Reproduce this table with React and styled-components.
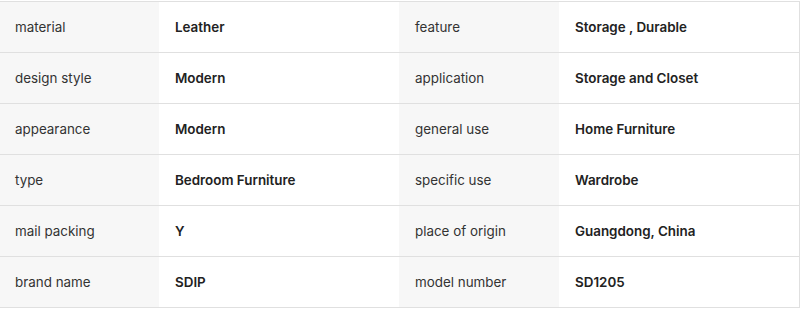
import React from 'react';
import styled, { createGlobalStyle } from 'styled-components';

const GlobalStyle = createGlobalStyle`
  body {
    margin: 0;
    background: #fff;
    font-family: Inter, "Noto Sans", sans-serif;
  }
`;

const Page = styled.div`
  padding-top: 1px;
  margin-left: -1px;
`;

const Table = styled.div`
  display: grid;
  grid-template-columns: 160px 240px 160px 240px;
  width: 800px;
  border-top: 1px solid #e0e0e0;
  border-right: 1px solid #e0e0e0;
`;

const Cell = styled.div`
  display: flex;
  align-items: center;
  height: 50px;
  padding: 0 16px;
  border-bottom: 1px solid #e0e0e0;
  background: ${({ label }) => (label ? '#f7f7f7' : '#fff')};
  color: ${({ label }) => (label ? '#333' : '#222')};
  font-size: 13.4px;
  font-weight: ${({ label }) => (label ? 400 : 600)};
`;

const specs = [
  ['material', 'Leather', 'feature', 'Storage , Durable'],
  ['design style', 'Modern', 'application', 'Storage and Closet'],
  ['appearance', 'Modern', 'general use', 'Home Furniture'],
  ['type', 'Bedroom Furniture', 'specific use', 'Wardrobe'],
  ['mail packing', 'Y', 'place of origin', 'Guangdong, China'],
  ['brand name', 'SDIP', 'model number', 'SD1205'],
];

const App = () => (
  <Page>
    <GlobalStyle />
    <Table>
      {specs.map((row, i) =>
        row.map((text, j) => (
          <Cell key={`c_${i}_${j}`} label={j % 2 === 0}>
            {text}
          </Cell>
        ))
      )}
    </Table>
  </Page>
);

export default App;
